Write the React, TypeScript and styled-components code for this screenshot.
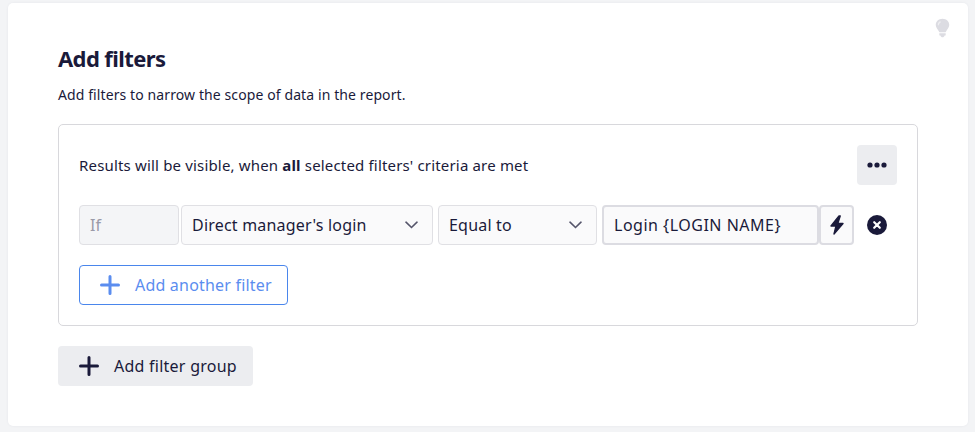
import React from 'react';
import styled, { createGlobalStyle } from 'styled-components';

const GlobalStyle = createGlobalStyle`
  html, body {
    margin: 0;
    height: 100%;
    background: #f3f4f6;
  }
  * {
    box-sizing: border-box;
  }
`;

const Page = styled.div`
  width: 975px;
  height: 432px;
  padding: 3px 7px 6px 8px;
  font-family: 'Noto Sans', sans-serif;
  color: #1a1a3a;
  overflow: hidden;
`;

const Card = styled.section`
  position: relative;
  height: 423px;
  padding: 40px 50px 0;
  background: #fff;
  border-radius: 5px;
  box-shadow: 0 0 3px rgba(30, 30, 60, 0.06);
`;

const HintIcon = styled.svg`
  position: absolute;
  top: 15px;
  right: 18px;
  width: 15px;
  height: 20px;
`;

const Title = styled.h2`
  margin: 0;
  font-size: 22px;
  line-height: 30px;
  font-weight: 700;
  letter-spacing: -0.6px;
`;

const Description = styled.p`
  margin: 12px 0 0;
  font-size: 14px;
  line-height: 20px;
  letter-spacing: 0.1px;
`;

const FilterGroup = styled.div`
  display: flex;
  flex-direction: column;
  margin-top: 19px;
  padding: 20px 20px 20px;
  height: 202px;
  border: 1px solid #d8d8dc;
  border-radius: 5px;
`;

const GroupHeader = styled.div`
  display: flex;
  align-items: center;
  justify-content: space-between;
  height: 40px;
`;

const Rule = styled.span`
  font-size: 15px;
  letter-spacing: 0.17px;
  b {
    font-weight: 700;
  }
`;

const MoreButton = styled.button`
  display: flex;
  align-items: center;
  justify-content: center;
  width: 40px;
  height: 40px;
  padding: 0;
  border: 0;
  border-radius: 4px;
  background: #ecedf0;
`;

const FilterRow = styled.div`
  display: flex;
  align-items: center;
  margin-top: 20px;
  height: 40px;
`;

const Field = styled.div<{ $width: number; $gap: number; $muted?: boolean }>`
  display: flex;
  align-items: center;
  justify-content: space-between;
  width: ${(p) => p.$width}px;
  height: 40px;
  margin-right: ${(p) => p.$gap}px;
  padding: 0 14px 0 10px;
  font-size: 16px;
  letter-spacing: 0.2px;
  border: 1px solid #e0e0e4;
  border-radius: 4px;
  background: ${(p) => (p.$muted ? '#f4f5f7' : '#fafafb')};
  color: ${(p) => (p.$muted ? '#9a9aa8' : '#1a1a3a')};
`;

const ValueField = styled(Field)`
  border: 2px solid #dcdce2;
  margin-right: 0;
  letter-spacing: 0.5px;
`;

const BoltButton = styled.button`
  display: flex;
  align-items: center;
  justify-content: center;
  width: 35px;
  height: 40px;
  padding: 0;
  background: #fafafb;
  border: 2px solid #dcdce2;
  border-radius: 4px;
`;

const RemoveIcon = styled.svg`
  width: 20px;
  height: 20px;
  margin-left: 13px;
`;

const AddFilterButton = styled.button`
  display: flex;
  align-items: center;
  gap: 15px;
  width: 209px;
  height: 40px;
  margin-top: 20px;
  padding: 0 0 0 20px;
  font: inherit;
  font-size: 16px;
  letter-spacing: 0.2px;
  color: #5b8def;
  background: #fff;
  border: 1px solid #4a86ec;
  border-radius: 4px;
`;

const AddGroupButton = styled.button`
  display: flex;
  align-items: center;
  gap: 15px;
  width: 195px;
  height: 40px;
  margin-top: 20px;
  padding: 0 0 0 21px;
  font: inherit;
  font-size: 16px;
  letter-spacing: 0.25px;
  color: #1a1a3a;
  background: #ecedf0;
  border: 0;
  border-radius: 4px;
`;

const Plus = ({ color }: { color: string }) => (
  <svg width="20" height="20" viewBox="0 0 20 20" style={{ flex: 'none' }}>
    <path d="M10 1.500v17M1.500 10h17" stroke={color} strokeWidth="3" strokeLinecap="round" />
  </svg>
);

const Chevron = () => (
  <svg width="13" height="8" viewBox="0 0 13 8">
    <path d="M1 1.200 6.500 6.500 12 1.200" fill="none" stroke="#55556b" strokeWidth="1.6" strokeLinecap="round" />
  </svg>
);

const App = (): JSX.Element => {
  return (
    <Page>
      <GlobalStyle />
      <Card>
        <HintIcon viewBox="0 0 16 21">
          <path
            d="M8 .5C3.800.5.800 3.500.800 7.200c0 3 2.400 4.400 3.400 7.100.1.400.4.600.8.600h6c.4 0 .7-.2.8-.6 1-2.700 3.400-4.100 3.400-7.100C15.200 3.500 12.200.5 8 .5Z"
            fill="#dcdce2"
          />
          <path d="M5.200 3.400C3.700 4.200 2.900 5.700 3 7.400c.1.700 1 .7 1.200 0 .2-1.300.8-2.100 1.800-2.700.7-.5 0-1.700-.8-1.300Z" fill="#eeeef1" />
          <path d="M4.600 16h6.800v1.900c0 .4-.3.6-.7.600h-.5c-.3 1-1.100 1.900-2.200 1.900s-1.900-.9-2.200-1.900h-.5c-.4 0-.7-.2-.7-.6Z" fill="#dcdce2" />
        </HintIcon>
        <Title>Add filters</Title>
        <Description>Add filters to narrow the scope of data in the report.</Description>
        <FilterGroup>
          <GroupHeader>
            <Rule>
              Results will be visible, when <b>all</b> selected filters' criteria are met
            </Rule>
            <MoreButton aria-label="More">
              <svg width="20" height="6" viewBox="0 0 20 6">
                <circle cx="3" cy="3" r="2.600" fill="#1a1a3a" />
                <circle cx="10" cy="3" r="2.600" fill="#1a1a3a" />
                <circle cx="17" cy="3" r="2.600" fill="#1a1a3a" />
              </svg>
            </MoreButton>
          </GroupHeader>
          <FilterRow>
            <Field $width={100} $gap={2} $muted>If</Field>
            <Field $width={252} $gap={5}>
              Direct manager's login
              <Chevron />
            </Field>
            <Field $width={159} $gap={5}>
              Equal to
              <Chevron />
            </Field>
            <ValueField $width={217} $gap={0}>Login {'{LOGIN NAME}'}</ValueField>
            <BoltButton aria-label="Dynamic value">
              <svg width="16" height="20" viewBox="0 0 16 20">
                <path
                  d="M10 1 2 11H7L5 19 14 8.500H8.800L11.200 1Z"
                  fill="#1a1a3a"
                  stroke="#1a1a3a"
                  strokeWidth="1.400"
                  strokeLinejoin="round"
                />
              </svg>
            </BoltButton>
            <RemoveIcon viewBox="0 0 20 20">
              <circle cx="10" cy="10" r="10" fill="#1a1a3a" />
              <path d="M7.200 7.200l5.600 5.600M12.800 7.200l-5.600 5.600" stroke="#fff" strokeWidth="2.200" strokeLinecap="round" />
            </RemoveIcon>
          </FilterRow>
          <AddFilterButton>
            <Plus color="#5b8def" />
            Add another filter
          </AddFilterButton>
        </FilterGroup>
        <AddGroupButton>
          <Plus color="#1a1a3a" />
          Add filter group
        </AddGroupButton>
      </Card>
    </Page>
  );
};

export default App;
